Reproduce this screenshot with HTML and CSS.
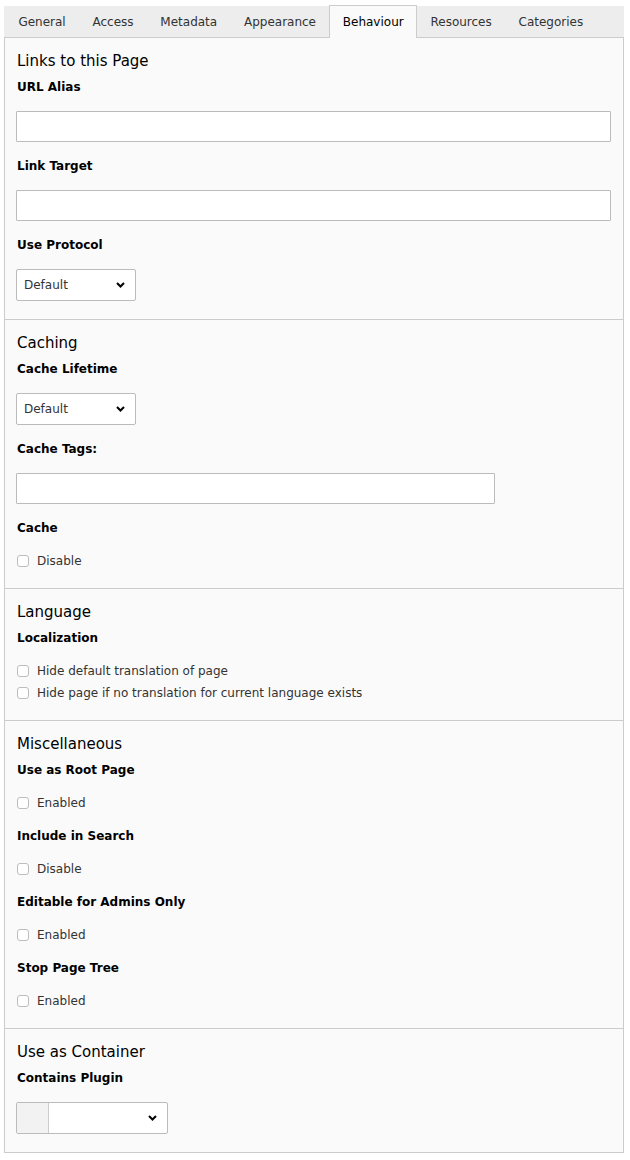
FILE: index.html
```html
<!DOCTYPE html>
<html lang="en">
<head>
<meta charset="utf-8">
<title>Page properties</title>
<link rel="stylesheet" href="styles.css">
</head>
<body>
<div class="wrap">
  <nav class="tabs">
    <span class="tab">General</span>
    <span class="tab">Access</span>
    <span class="tab">Metadata</span>
    <span class="tab">Appearance</span>
    <span class="tab active">Behaviour</span>
    <span class="tab">Resources</span>
    <span class="tab">Categories</span>
  </nav>
  <div class="panel">
    <section class="sec">
      <h2 class="sec-title">Links to this Page</h2>
      <div class="field">
        <div class="label">URL Alias</div>
        <div class="input"></div>
      </div>
      <div class="field">
        <div class="label">Link Target</div>
        <div class="input"></div>
      </div>
      <div class="field">
        <div class="label">Use Protocol</div>
        <div class="select"><span class="sel-text">Default</span><svg class="chev" width="9" height="6" viewBox="0 0 9 6"><path d="M1 1 L4.5 4.5 L8 1" fill="none" stroke="#000" stroke-width="2"/></svg></div>
      </div>
    </section>
    <section class="sec">
      <h2 class="sec-title">Caching</h2>
      <div class="field">
        <div class="label">Cache Lifetime</div>
        <div class="select"><span class="sel-text">Default</span><svg class="chev" width="9" height="6" viewBox="0 0 9 6"><path d="M1 1 L4.5 4.5 L8 1" fill="none" stroke="#000" stroke-width="2"/></svg></div>
      </div>
      <div class="field">
        <div class="label">Cache Tags:</div>
        <div class="input input-md"></div>
      </div>
      <div class="field">
        <div class="label">Cache</div>
        <div class="check"><span class="box"></span>Disable</div>
      </div>
    </section>
    <section class="sec">
      <h2 class="sec-title">Language</h2>
      <div class="field">
        <div class="label">Localization</div>
        <div class="check"><span class="box"></span>Hide default translation of page</div>
        <div class="check check-next"><span class="box"></span>Hide page if no translation for current language exists</div>
      </div>
    </section>
    <section class="sec">
      <h2 class="sec-title">Miscellaneous</h2>
      <div class="field">
        <div class="label">Use as Root Page</div>
        <div class="check"><span class="box"></span>Enabled</div>
      </div>
      <div class="field">
        <div class="label">Include in Search</div>
        <div class="check"><span class="box"></span>Disable</div>
      </div>
      <div class="field">
        <div class="label">Editable for Admins Only</div>
        <div class="check"><span class="box"></span>Enabled</div>
      </div>
      <div class="field">
        <div class="label">Stop Page Tree</div>
        <div class="check"><span class="box"></span>Enabled</div>
      </div>
    </section>
    <section class="sec">
      <h2 class="sec-title">Use as Container</h2>
      <div class="field">
        <div class="label">Contains Plugin</div>
        <div class="select select-plugin"><span class="addon"></span><span class="sel-text"></span><svg class="chev" width="9" height="6" viewBox="0 0 9 6"><path d="M1 1 L4.5 4.5 L8 1" fill="none" stroke="#000" stroke-width="2"/></svg></div>
      </div>
    </section>
  </div>
</div>
</body>
</html>
```

FILE: styles.css
```css
* { box-sizing: border-box; }
html, body { margin: 0; padding: 0; background: #ffffff; }
body {
  font-family: "DejaVu Sans", Verdana, sans-serif;
  font-size: 12px;
  color: #000;
}
.wrap {
  width: 620px;
  margin: 6px 0 0 4px;
}
.tabs {
  display: flex;
  height: 31px;
  background: #ededed;
  padding-left: 1px;
  position: relative;
  z-index: 1;
}
.tab {
  display: flex;
  align-items: center;
  padding: 0 12.4px;
  height: 31px;
  border: 1px solid transparent;
  border-bottom: none;
  color: #333;
  font-size: 12px;
  white-space: nowrap;
}
.tab.active {
  background: #fafafa;
  border-color: #cccccc;
  height: 33px;
  margin-top: -1px;
  color: #000;
}
.panel {
  background: #fafafa;
  border: 1px solid #cccccc;
}
.sec {
  padding: 13px 12px 18px 11px;
}
.sec + .sec {
  border-top: 1px solid #cccccc;
}
.sec-title {
  margin: 0 0 8px 1px;
  font-size: 15px;
  line-height: 20px;
  font-weight: normal;
  color: #000;
}
.field + .field { margin-top: 16px; }
.label {
  font-weight: bold;
  font-size: 12px;
  line-height: 16px;
  margin: 0 0 16px 1px;
}
.input {
  height: 31px;
  width: 100%;
  background: #ffffff;
  border: 1px solid #bbbbbb;
  border-radius: 1px;
}
.input-md { width: 479px; }
.select {
  display: flex;
  align-items: center;
  justify-content: space-between;
  width: 120px;
  height: 32px;
  background: #ffffff;
  border: 1px solid #bbbbbb;
  border-radius: 2px;
  padding: 0 10px 0 7px;
  color: #333;
}
.chev { display: block; }
.select-plugin {
  width: 152px;
  padding: 0 10px 0 0;
}
.addon {
  width: 32px;
  align-self: stretch;
  background: #f2f2f2;
  border-right: 1px solid #cccccc;
}
.sel-text { flex: 1; }
.check {
  display: flex;
  align-items: center;
  height: 18px;
  line-height: 18px;
  color: #333;
}
.check-next { margin-top: 4px; }
.box {
  width: 12px;
  height: 12px;
  border: 1px solid #bdbdbd;
  border-radius: 3px;
  background: #ffffff;
  margin: 0 8px 0 1px;
  flex: none;
}
```
